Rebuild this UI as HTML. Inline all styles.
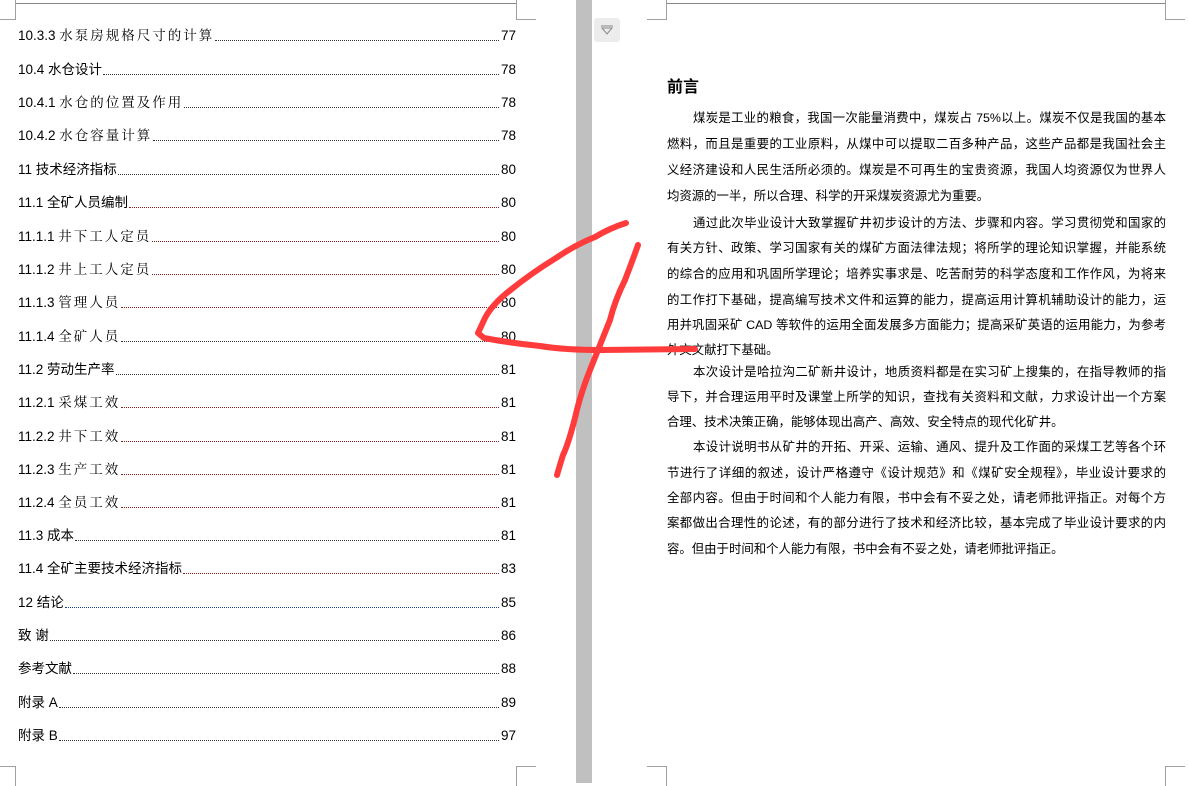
<!DOCTYPE html>
<html><head><meta charset="utf-8">
<style>
*{margin:0;padding:0;box-sizing:border-box}
body{width:1188px;height:783px;overflow:hidden;background:#fff;position:relative;font-family:"Liberation Sans","Noto Sans CJK SC",sans-serif;color:#000}
.bar{position:absolute;left:576px;top:0;width:16px;height:783px;background:#c0c0c0}
.c{position:absolute;border-color:#a0a0a0;border-style:solid;width:20px;height:20px}
.row{position:absolute;left:18px;width:498px;height:18px;display:flex;align-items:flex-end;font-size:13.5px;line-height:18px;white-space:nowrap}
.row .d{flex:1;border-bottom:1px dotted #333;margin:0 2px 4px 1px;height:1px}
.row .d.r{border-bottom-color:#8b1a1a}
.row .d.b{border-bottom-color:#1a3a8b}
.s{font-family:"Noto Serif CJK SC","Liberation Serif",serif;letter-spacing:2px}
.ln{position:absolute;left:667px;width:499px;font-size:12.4px;line-height:18px;text-align:justify;text-align-last:justify;white-space:nowrap;overflow:hidden}
.ln.l{text-align-last:left}
</style></head><body>
<div class="bar"></div>
<div class="c" style="left:-4px;top:0;border-width:0 1px 1px 0"></div>
<div class="c" style="left:516px;top:0;border-width:0 0 1px 1px"></div>
<div style="position:absolute;left:16px;top:3px;width:500px;border-top:1px solid #888"></div>
<div class="c" style="left:-4px;top:766px;border-width:1px 1px 0 0"></div>
<div class="c" style="left:516px;top:766px;border-width:1px 0 0 1px"></div>
<div class="c" style="left:647px;top:0;border-width:0 1px 1px 0"></div>
<div class="c" style="left:1165px;top:0;border-width:0 0 1px 1px"></div>
<div style="position:absolute;left:667px;top:3px;width:498px;border-top:1px solid #888"></div>
<div class="c" style="left:647px;top:766px;border-width:1px 1px 0 0"></div>
<div class="c" style="left:1165px;top:766px;border-width:1px 0 0 1px"></div>
<div style="position:absolute;left:594px;top:18px;width:26px;height:24px;background:#ececec;border-radius:3px"></div>
<svg style="position:absolute;left:600px;top:25px" width="14" height="10"><path d="M1 1H13M2 3L7 9L12 3Z" fill="none" stroke="#888" stroke-width="1"/></svg>

<div class="row" style="top:27px"><span>10.3.3 <span class="s">水泵房规格尺寸的计算</span></span><span class="d"></span><span>77</span></div>
<div class="row" style="top:61px"><span>10.4 水仓设计</span><span class="d"></span><span>78</span></div>
<div class="row" style="top:94px"><span>10.4.1 <span class="s">水仓的位置及作用</span></span><span class="d"></span><span>78</span></div>
<div class="row" style="top:127px"><span>10.4.2 <span class="s">水仓容量计算</span></span><span class="d"></span><span>78</span></div>
<div class="row" style="top:161px"><span>11 技术经济指标</span><span class="d"></span><span>80</span></div>
<div class="row" style="top:194px"><span>11.1 全矿人员编制</span><span class="d r"></span><span>80</span></div>
<div class="row" style="top:228px"><span>11.1.1 <span class="s">井下工人定员</span></span><span class="d r"></span><span>80</span></div>
<div class="row" style="top:261px"><span>11.1.2 <span class="s">井上工人定员</span></span><span class="d r"></span><span>80</span></div>
<div class="row" style="top:294px"><span>11.1.3 <span class="s">管理人员</span></span><span class="d r"></span><span>80</span></div>
<div class="row" style="top:328px"><span>11.1.4 <span class="s">全矿人员</span></span><span class="d"></span><span>80</span></div>
<div class="row" style="top:361px"><span>11.2 劳动生产率</span><span class="d"></span><span>81</span></div>
<div class="row" style="top:394px"><span>11.2.1 <span class="s">采煤工效</span></span><span class="d r"></span><span>81</span></div>
<div class="row" style="top:428px"><span>11.2.2 <span class="s">井下工效</span></span><span class="d r"></span><span>81</span></div>
<div class="row" style="top:461px"><span>11.2.3 <span class="s">生产工效</span></span><span class="d r"></span><span>81</span></div>
<div class="row" style="top:494px"><span>11.2.4 <span class="s">全员工效</span></span><span class="d r"></span><span>81</span></div>
<div class="row" style="top:527px"><span>11.3 成本</span><span class="d"></span><span>81</span></div>
<div class="row" style="top:560px"><span>11.4 全矿主要技术经济指标</span><span class="d r"></span><span>83</span></div>
<div class="row" style="top:594px"><span>12 结论</span><span class="d b"></span><span>85</span></div>
<div class="row" style="top:627px"><span>致 谢</span><span class="d"></span><span>86</span></div>
<div class="row" style="top:660px"><span>参考文献</span><span class="d"></span><span>88</span></div>
<div class="row" style="top:694px"><span>附录 A</span><span class="d"></span><span>89</span></div>
<div class="row" style="top:727px"><span>附录 B</span><span class="d"></span><span>97</span></div>

<div style="position:absolute;left:667px;top:73px;font-size:16px;font-weight:bold">前言</div>
<div class="ln" style="top:109px;padding-left:26px">煤炭是工业的粮食，我国一次能量消费中，煤炭占 75%以上。煤炭不仅是我国的基本</div>
<div class="ln" style="top:135px">燃料，而且是重要的工业原料，从煤中可以提取二百多种产品，这些产品都是我国社会主</div>
<div class="ln" style="top:161px">义经济建设和人民生活所必须的。煤炭是不可再生的宝贵资源，我国人均资源仅为世界人</div>
<div class="ln l" style="top:187px">均资源的一半，所以合理、科学的开采煤炭资源尤为重要。</div>
<div class="ln" style="top:214px;padding-left:26px">通过此次毕业设计大致掌握矿井初步设计的方法、步骤和内容。学习贯彻党和国家的</div>
<div class="ln" style="top:239px">有关方针、政策、学习国家有关的煤矿方面法律法规；将所学的理论知识掌握，并能系统</div>
<div class="ln" style="top:265px">的综合的应用和巩固所学理论；培养实事求是、吃苦耐劳的科学态度和工作作风，为将来</div>
<div class="ln" style="top:291px">的工作打下基础，提高编写技术文件和运算的能力，提高运用计算机辅助设计的能力，运</div>
<div class="ln" style="top:316px">用并巩固采矿 CAD 等软件的运用全面发展多方面能力；提高采矿英语的运用能力，为参考</div>
<div class="ln l" style="top:341px">外文文献打下基础。</div>
<div class="ln" style="top:363px;padding-left:26px">本次设计是哈拉沟二矿新井设计，地质资料都是在实习矿上搜集的，在指导教师的指</div>
<div class="ln" style="top:388px">导下，并合理运用平时及课堂上所学的知识，查找有关资料和文献，力求设计出一个方案</div>
<div class="ln l" style="top:413px">合理、技术决策正确，能够体现出高产、高效、安全特点的现代化矿井。</div>
<div class="ln" style="top:438px;padding-left:26px">本设计说明书从矿井的开拓、开采、运输、通风、提升及工作面的采煤工艺等各个环</div>
<div class="ln" style="top:464px">节进行了详细的叙述，设计严格遵守《设计规范》和《煤矿安全规程》，毕业设计要求的</div>
<div class="ln" style="top:489px">全部内容。但由于时间和个人能力有限，书中会有不妥之处，请老师批评指正。对每个方</div>
<div class="ln" style="top:514px">案都做出合理性的论述，有的部分进行了技术和经济比较，基本完成了毕业设计要求的内</div>
<div class="ln l" style="top:540px">容。但由于时间和个人能力有限，书中会有不妥之处，请老师批评指正。</div>

<svg style="position:absolute;left:0;top:0" width="1188" height="783">
<g fill="none" stroke="#ff3b3b" stroke-width="6" stroke-linecap="round" stroke-linejoin="round">
<path d="M626 223 Q610 228 595 237 Q575 245 556 258 Q530 274 508 292 Q492 305 485 318 L478 333 L484 338 Q510 343 540 346 Q565 350 600 350 L695 349"/>
<path d="M638 245 Q632 262 625 280 Q615 300 610 320 Q600 345 590 370 Q580 395 575 418 Q568 445 563 455 Q559 468 557 475"/>
</g>
</svg>
</body></html>
